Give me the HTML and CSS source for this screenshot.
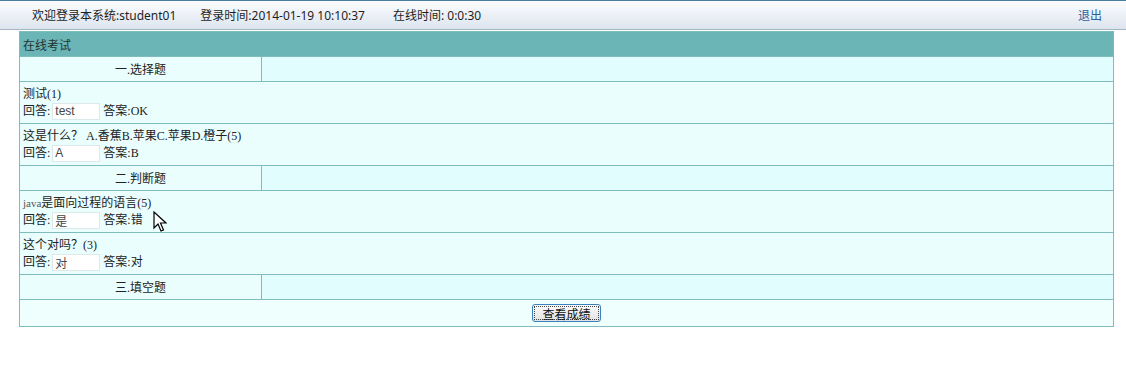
FILE: index.html
```html
<!DOCTYPE html>
<html lang="zh-CN">
<head>
<meta charset="utf-8">
<title>在线考试</title>
<link rel="stylesheet" href="styles.css">
</head>
<body>
<div class="topbar">
  <span class="info info-welcome">欢迎登录本系统:student01</span>
  <span class="info info-login">登录时间:2014-01-19 10:10:37</span>
  <span class="info">在线时间: 0:0:30</span>
  <a class="logout" href="#">退出</a>
</div>
<table class="exam">
  <tr><td colspan="2" class="title">在线考试</td></tr>
  <tr class="section"><td class="sec-name">一.选择题</td><td class="sec-blank"></td></tr>
  <tr><td colspan="2" class="q"><div>测试(1)</div><div class="ans">回答:<input class="reply" value="test" readonly><span>答案:OK</span></div></td></tr>
  <tr><td colspan="2" class="q"><div>这是什么？ A.香蕉B.苹果C.苹果D.橙子(5)</div><div class="ans">回答:<input class="reply" value="A" readonly><span>答案:B</span></div></td></tr>
  <tr class="section"><td class="sec-name">二.判断题</td><td class="sec-blank"></td></tr>
  <tr><td colspan="2" class="q"><div><span class="small">java</span>是面向过程的语言(5)</div><div class="ans">回答:<input class="reply" value="是" readonly><span>答案:错</span></div></td></tr>
  <tr><td colspan="2" class="q"><div>这个对吗？(3)</div><div class="ans">回答:<input class="reply" value="对" readonly><span>答案:对</span></div></td></tr>
  <tr class="section"><td class="sec-name">三.填空题</td><td class="sec-blank"></td></tr>
  <tr><td colspan="2" class="actions"><button class="btn" type="button"><span class="btn-inner">查看成绩</span></button></td></tr>
</table>
<svg class="cursor" width="14" height="22" viewBox="0 0 14 22"><path d="M1 1 L1 17 L5 13 L8 20 L10.5 19 L7.5 12 L13 12 Z" fill="#fff" stroke="#000" stroke-width="1.2" stroke-linejoin="miter"/></svg>
</body>
</html>
```
FILE: styles.css
```css
html, body {
  margin: 0;
  padding: 0;
  background: #ffffff;
}
body {
  position: relative;
  font-family: "Liberation Sans", "Noto Sans CJK SC", sans-serif;
  font-size: 12px;
  color: #222;
}
.topbar {
  display: flex;
  align-items: center;
  height: 28px;
  border-top: 1px solid #4a7c9c;
  border-bottom: 1px solid #a7b6c4;
  background: linear-gradient(#fbfcfe, #dde5ef);
  padding-left: 32px;
  padding-right: 24px;
  font-family: "Noto Sans", "Noto Sans CJK SC", sans-serif;
  font-size: 12px;
  color: #1e1e1e;
}
.info { margin-right: 24px; }
.info-login { margin-right: 28px; }
.logout {
  margin-left: auto;
  color: #2e5f9a;
  text-decoration: none;
}
.exam {
  margin: 1px 0 0 19px;
  width: 1095px;
  border-collapse: collapse;
  border: 1px solid #86c2c3;
  font-family: "Liberation Serif", "Noto Sans CJK SC", serif;
  font-size: 12px;
  color: #222;
}
.exam td {
  border: 1px solid #7fbcbd;
  padding: 0 3px;
}
.title {
  height: 24px;
  background: #6cb5b6;
  color: #233;
  font-family: "Noto Sans CJK SC", sans-serif;
}
.section td { height: 24px; }
.sec-name {
  width: 235px;
  text-align: center;
  background: #ebfefe;
}
.sec-blank { background: #e2fdfd; }
.q {
  height: 41px;
  background: #ebfefe;
  line-height: 17px;
  vertical-align: middle;
}
.ans { display: flex; align-items: center; }
.reply {
  box-sizing: border-box;
  width: 48px;
  height: 17px;
  margin: 0 3px 0 2px;
  padding: 0 2px;
  border: 1px solid #dde8ea;
  background: #fff;
  font-family: "Liberation Sans", "Noto Sans CJK SC", sans-serif;
  font-size: 12px;
  color: #444;
  outline: none;
}
.small { font-size: 11px; color: #555; }
.actions {
  height: 26px;
  text-align: center;
  background: #effffe;
}
.btn {
  box-sizing: border-box;
  width: 69px;
  height: 18px;
  padding: 1px;
  border: 1px solid #3a82bd;
  border-radius: 3px;
  background: linear-gradient(#fafafa, #e2e2e2);
  font-family: "Noto Sans CJK SC", sans-serif;
  font-size: 12px;
  color: #111;
  vertical-align: middle;
}
.btn-inner {
  display: block;
  height: 100%;
  line-height: 13px;
  border: 1px dotted #444;
  box-sizing: border-box;
}
.cursor {
  position: absolute;
  left: 153px;
  top: 211px;
}
```
